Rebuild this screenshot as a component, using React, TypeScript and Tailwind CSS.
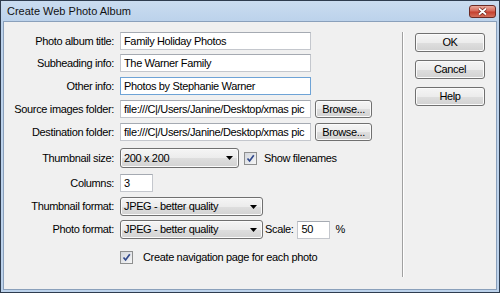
import type { ReactNode } from "react";

const fieldBorder = "border border-[#c4c7cd] border-t-[#a5aab2]";
const buttonFace =
  "rounded-[3px] border border-[#707070] bg-[linear-gradient(#f5f5f5_0%,#ececec_50%,#dedede_51%,#d2d2d2_100%)] shadow-[inset_0_0_0_1px_#fbfbfb]";

function TextBox({ value, className, focused }: { value: string; className: string; focused?: boolean }) {
  return (
    <div
      className={`flex h-[18px] shrink-0 items-center overflow-hidden whitespace-nowrap bg-white pl-[3px] ${
        focused ? "border border-[#6ea3d6]" : fieldBorder
      } ${className}`}
    >
      {value}
    </div>
  );
}

function Select({ value, className }: { value: string; className: string }) {
  return (
    <div className={`flex h-[19px] shrink-0 items-center justify-between pl-[3px] pr-[5px] ${buttonFace} ${className}`}>
      <span className="whitespace-nowrap">{value}</span>
      <svg width="7" height="4" viewBox="0 0 7 4">
        <polygon points="0,0 7,0 3.5,4" fill="#000" />
      </svg>
    </div>
  );
}

function Button({ children, className }: { children: ReactNode; className: string }) {
  return <div className={`flex items-center justify-center ${buttonFace} ${className}`}>{children}</div>;
}

function CheckBox() {
  return (
    <div className="flex h-[13px] w-[13px] shrink-0 items-center justify-center border border-[#8e8f8f] bg-white">
      <div className="flex h-[11px] w-[11px] items-center justify-center bg-[linear-gradient(135deg,#d2d6dc,#f6f6f6)]">
        <svg width="9" height="9" viewBox="0 0 9 9">
          <path d="M1.5 4.5 L3.6 7 L7.8 1.3" fill="none" stroke="#31498c" strokeWidth="1.7" />
        </svg>
      </div>
    </div>
  );
}

function Row({ label, className, children }: { label: string; className: string; children: ReactNode }) {
  return (
    <div className={`flex items-center gap-[6px] ${className}`}>
      <span className="w-[110px] shrink-0 text-right">{label}</span>
      {children}
    </div>
  );
}

export default function App() {
  return (
    <div className="flex h-[293px] w-[500px] flex-col border border-[#2e3c4f] bg-[#bcd2eb] font-['Liberation_Sans',Arial,sans-serif] text-[11px] tracking-[-0.35px] text-black">
      {/* title bar */}
      <div className="flex h-[20px] shrink-0 items-center justify-between bg-[linear-gradient(#cadcf0,#bcd2eb)] pl-[6px] pr-[3px]">
        <span className="text-[11px] tracking-normal text-[#111]">Create Web Photo Album</span>
        <div className="mt-[1px] flex h-[13px] w-[27px] items-center justify-center rounded-[3px] border border-[#6b2a24] bg-[linear-gradient(#e9aa9c_0%,#d6695a_45%,#c5402f_55%,#d4705c_100%)]">
          <svg width="11" height="9" viewBox="0 0 11 9">
            <path d="M2 1.5 L9 7.5 M9 1.5 L2 7.5" stroke="#6a2219" strokeWidth="3.2" />
            <path d="M2 1.5 L9 7.5 M9 1.5 L2 7.5" stroke="#fff" strokeWidth="1.8" />
          </svg>
        </div>
      </div>

      {/* dialog body */}
      <div className="mx-[2px] mb-[2px] flex flex-1 border border-[#8aa0bb] bg-[#f0f0f0]">
        <div className="flex w-[398px] shrink-0 flex-col pt-[10px]">
          <Row label="Photo album title:" className="">
            <TextBox value="Family Holiday Photos" className="w-[191px]" />
          </Row>
          <Row label="Subheading info:" className="mt-[4px]">
            <TextBox value="The Warner Family" className="w-[191px]" />
          </Row>
          <Row label="Other info:" className="mt-[5px]">
            <TextBox value="Photos by Stephanie Warner" className="w-[191px]" focused />
          </Row>
          <Row label="Source images folder:" className="mt-[5px]">
            <TextBox value="file:///C|/Users/Janine/Desktop/xmas pic" className="w-[191px]" />
            <Button className="-ml-[2px] h-[18px] w-[57px]">Browse...</Button>
          </Row>
          <Row label="Destination folder:" className="mt-[5px]">
            <TextBox value="file:///C|/Users/Janine/Desktop/xmas pic" className="w-[191px]" />
            <Button className="-ml-[2px] h-[18px] w-[57px]">Browse...</Button>
          </Row>
          <Row label="Thumbnail size:" className="mt-[7px]">
            <Select value="200 x 200" className="w-[119px] h-[20px]" />
            <div className="ml-[-1px] flex items-center gap-[7px]">
              <CheckBox />
              <span>Show filenames</span>
            </div>
          </Row>
          <Row label="Columns:" className="mt-[6px]">
            <TextBox value="3" className="w-[33px]" />
          </Row>
          <Row label="Thumbnail format:" className="mt-[5px]">
            <Select value="JPEG - better quality" className="w-[143px]" />
          </Row>
          <Row label="Photo format:" className="mt-[4px]">
            <Select value="JPEG - better quality" className="w-[143px]" />
            <span className="-ml-[4px]">Scale:</span>
            <TextBox value="50" className="-ml-[2px] w-[33px]" />
            <span className="-ml-[1px]">%</span>
          </Row>
          <div className="mt-[10px] flex items-center gap-[10px] pl-[116px]">
            <CheckBox />
            <span>Create navigation page for each photo</span>
          </div>
        </div>

        <div className="mt-[10px] h-[245px] w-[2px] shrink-0 border-l border-l-[#a0a0a0] border-r border-r-white" />

        <div className="ml-[11px] flex w-[70px] flex-col pt-[11px]">
          <Button className="h-[19px]">OK</Button>
          <Button className="mt-[8px] h-[19px]">Cancel</Button>
          <Button className="mt-[8px] h-[19px]">Help</Button>
        </div>
      </div>
    </div>
  );
}
